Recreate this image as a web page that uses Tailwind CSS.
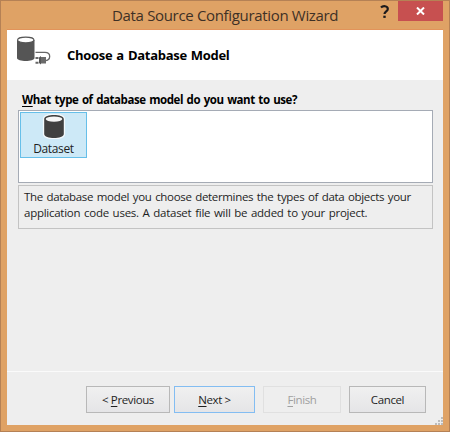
<!DOCTYPE html>
<html lang="en">
<head>
<meta charset="utf-8">
<title>Data Source Configuration Wizard</title>
<script src="https://cdn.jsdelivr.net/npm/@tailwindcss/browser@4"></script>
</head>
<body class="w-[450px] h-[432px] overflow-hidden font-['Open_Sans','Noto_Sans',sans-serif] text-[11.5px] text-[#1e1e1e]">
<div class="flex flex-col w-[450px] h-[432px] bg-[#dfa265] border border-[#b58155] px-[6px] pb-[6px]">
  <header class="flex h-[29px] shrink-0 items-start border-b border-[#e2935a]">
    <h1 class="ml-[105px] w-[228px] shrink-0 mt-[3px] whitespace-nowrap text-[15px] leading-[22px] tracking-[-0.33px] text-[#3e3025]">Data Source Configuration Wizard</h1>
    <svg class="ml-[40px] mt-[4px] w-[10px] h-[14px] shrink-0" viewBox="0 0 10 14" fill="none" stroke="#1c1a1c" stroke-width="2.2"><path d="M1 2.600C2.800.6 7.800.6 7.800 4c0 2.400-3.300 2.400-3.300 5"/><path d="M3.300 11.800h2.400"/></svg>
    <div class="ml-[8px] flex w-[45px] h-[20px] shrink-0 items-center justify-center bg-[#c75050]">
      <svg class="w-[9px] h-[8px] ml-[-1px]" viewBox="0 0 9 8" stroke="#fff" stroke-width="2"><path d="M1 .5l7 7M8 .5l-7 7"/></svg>
    </div>
  </header>
  <main class="flex flex-col flex-1 min-h-0 bg-[#eeeeee]">
    <section class="flex h-[50px] shrink-0 bg-white">
      <svg class="ml-[9px] mt-[6px] w-[36px] h-[30px] shrink-0" viewBox="0 0 36 30">
        <path d="M1 4v18c0 4 17.500 4 17.500 0V4z" fill="#555"/>
        <ellipse cx="9.750" cy="4" rx="8.200" ry="2.900" fill="#fff" stroke="#555" stroke-width="1.100"/>
        <path d="M19.500 16.300h9.500c6.500 0 6 8.200 0 8.200" fill="none" stroke="#666" stroke-width="1.300"/>
        <path d="M23 21.500l2-1.500v8.500l-2-1.500z" fill="#555"/>
        <path d="M25 21h5v6.500h-5z" fill="#6a6a6a"/>
        <path d="M19.500 22h3M19.500 26.800h3" stroke="#666" stroke-width="2"/>
      </svg>
      <h2 class="ml-[15px] mt-[16px] whitespace-nowrap text-[13px] leading-[18px] font-bold tracking-[-0.3px] [word-spacing:1px] text-black">Choose a Database Model</h2>
    </section>
    <section class="flex flex-col flex-1 px-[11px] pt-[11px]">
      <h3 class="ml-[4px] h-[19px] whitespace-nowrap leading-[17px] font-bold tracking-[-0.43px] [word-spacing:1px] text-black"><span class="underline underline-offset-2">W</span>hat type of database model do you want to use?</h3>
      <div class="h-[73px] w-[415px] border border-[#a5abb5] bg-white pt-[1px] pl-[1px]">
        <div class="flex h-[46px] w-[67px] flex-col items-center border border-[#66bfe9] bg-[#cde9f7]">
          <svg class="mt-[1px] w-[24px] h-[25px] shrink-0" viewBox="0 0 24 25">
            <path d="M2.200 5v15c0 5.300 19.600 5.300 19.600 0V5c0-5.300-19.600-5.300-19.600 0z" fill="#404040" stroke="#f4fafd" stroke-width="2.600" paint-order="stroke"/>
            <ellipse cx="12" cy="5.100" rx="8.300" ry="2.700" fill="#f6f6f6"/>
          </svg>
          <span class="text-[12px] leading-[18px] mt-[1px] tracking-[-0.35px]">Dataset</span>
        </div>
      </div>
      <div class="mt-[2px] h-[44px] w-[415px] border border-[#c3c3c3] bg-[#eeeeee] pl-[5px] pt-[3px] whitespace-nowrap leading-[16px]">
        <p class="tracking-[-0.33px] [word-spacing:1px]">The database model you choose determines the types of data objects your</p>
        <p class="tracking-[-0.26px] [word-spacing:1px]">application code uses. A dataset file will be added to your project.</p>
      </div>
    </section>
    <footer class="relative flex h-[54px] shrink-0 border-t border-[#fafafa] pt-[14px] pl-[79px] tracking-[-0.38px] [word-spacing:1px]">
      <button class="h-[27px] w-[84px] border border-[#b8b8b8] bg-linear-to-b from-[#f0f0f0] to-[#e5e5e7]">&lt; <span class="underline underline-offset-2">P</span>revious</button>
      <button class="ml-[4px] h-[27px] w-[81px] border border-[#83bdf2] bg-linear-to-b from-[#f0f0f0] to-[#e5e5e7]"><span class="underline underline-offset-2">N</span>ext &gt;</button>
      <button class="ml-[8px] h-[27px] w-[78px] border border-[#e0e0e0] text-[#a0a0a0]"><span class="underline underline-offset-2">F</span>inish</button>
      <button class="ml-[8px] h-[27px] w-[77px] border border-[#b8b8b8] bg-linear-to-b from-[#f0f0f0] to-[#e5e5e7]">Cancel</button>
      <svg class="absolute right-0 bottom-0 w-[8px] h-[8px]" viewBox="0 0 8 8" fill="#bcbcbc"><path d="M6 0h2v2H6zM3 3h2v2H3zM6 3h2v2H6zM0 6h2v2H0zM3 6h2v2H3zM6 6h2v2H6z"/></svg>
    </footer>
  </main>
</div>
</body>
</html>
